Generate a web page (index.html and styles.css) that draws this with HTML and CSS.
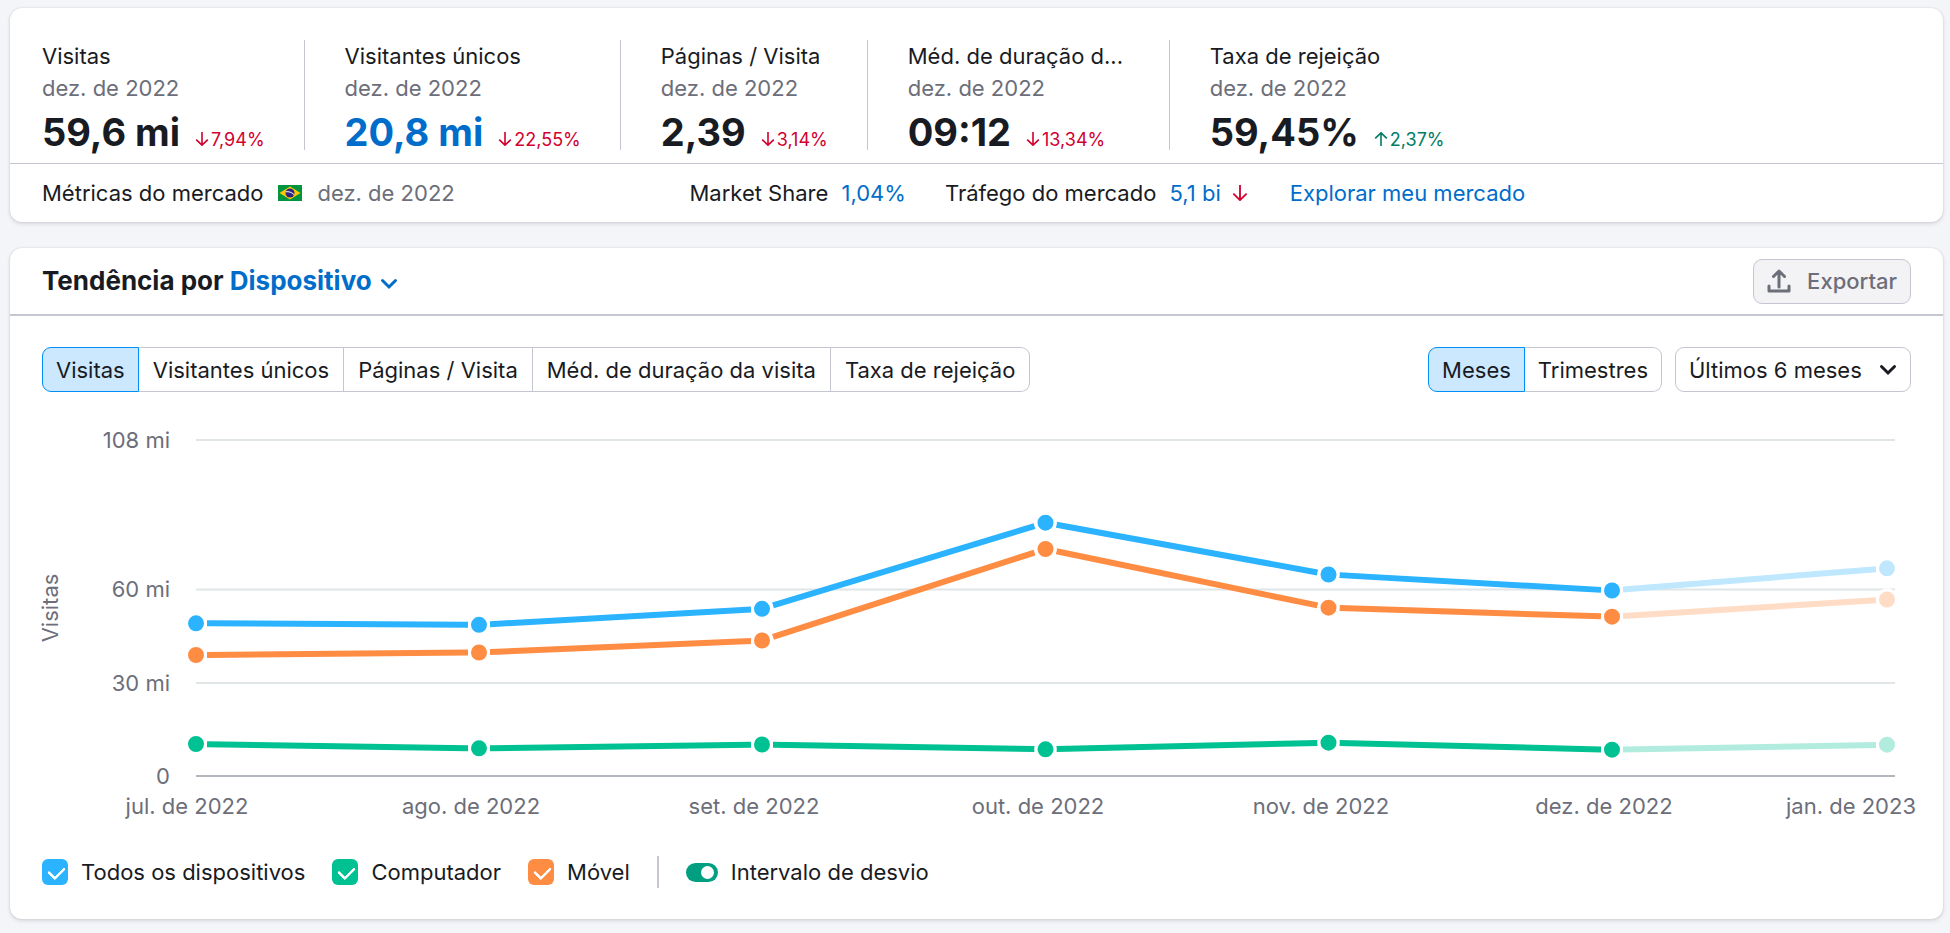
FILE: index.html
```html
<!DOCTYPE html>
<html lang="pt-BR">
<head>
<meta charset="utf-8">
<title>Visitas</title>
<link rel="stylesheet" href="styles.css">
</head>
<body>
<svg class="defs" width="0" height="0" aria-hidden="true">
  <symbol id="arrow-down" viewBox="0 0 14 14"><path d="M7 0v13M1.2 7.6 7 13.2l5.800-5.600" fill="none" stroke="currentColor" stroke-width="1.6"/></symbol>
  <symbol id="arrow-up" viewBox="0 0 14 14"><path d="M7 14V1M1.200 6.400 7 .8l5.800 5.600" fill="none" stroke="currentColor" stroke-width="1.600"/></symbol>
  <symbol id="chevron" viewBox="0 0 18 12"><path d="M2.500 2.500 9 9l6.500-6.500" fill="none" stroke="currentColor" stroke-width="3" stroke-linecap="round" stroke-linejoin="miter"/></symbol>
</svg>
<main class="page">
  <section class="card">
    <div class="metrics">
      <div class="metric">
        <div class="metric-name">Visitas</div>
        <div class="metric-date">dez. de 2022</div>
        <div class="metric-row"><strong class="value">59,6 mi</strong><span class="delta down"><svg class="delta-icon"><use href="#arrow-down"/></svg>7,94%</span></div>
      </div>
      <div class="metric">
        <div class="metric-name">Visitantes únicos</div>
        <div class="metric-date">dez. de 2022</div>
        <div class="metric-row"><a class="value link" href="#">20,8 mi</a><span class="delta down"><svg class="delta-icon"><use href="#arrow-down"/></svg>22,55%</span></div>
      </div>
      <div class="metric">
        <div class="metric-name">Páginas / Visita</div>
        <div class="metric-date">dez. de 2022</div>
        <div class="metric-row"><strong class="value">2,39</strong><span class="delta down"><svg class="delta-icon"><use href="#arrow-down"/></svg>3,14%</span></div>
      </div>
      <div class="metric">
        <div class="metric-name">Méd. de duração d...</div>
        <div class="metric-date">dez. de 2022</div>
        <div class="metric-row"><strong class="value">09:12</strong><span class="delta down"><svg class="delta-icon"><use href="#arrow-down"/></svg>13,34%</span></div>
      </div>
      <div class="metric">
        <div class="metric-name">Taxa de rejeição</div>
        <div class="metric-date">dez. de 2022</div>
        <div class="metric-row"><strong class="value">59,45%</strong><span class="delta up"><svg class="delta-icon"><use href="#arrow-up"/></svg>2,37%</span></div>
      </div>
    </div>
    <div class="market">
      <div class="market-title">
        <span>Métricas do mercado</span>
        <svg class="flag" viewBox="0 0 24 16" role="img" aria-label="Brasil">
          <rect width="24" height="16" fill="#009440"/>
          <path d="M12 1.500 22.500 8 12 14.500 1.500 8z" fill="#ffcb00"/>
          <circle cx="12" cy="8" r="4.500" fill="#302681"/>
          <path d="M7.800 6.800c3-.5 6 .5 8.200 2.800" fill="none" stroke="#fff" stroke-width="1"/>
        </svg>
        <span class="muted">dez. de 2022</span>
      </div>
      <div class="market-facts">
        <span class="fact">Market Share <a class="link" href="#">1,04%</a></span>
        <span class="fact">Tráfego do mercado <a class="link" href="#">5,1 bi</a><svg class="fact-icon down"><use href="#arrow-down"/></svg></span>
        <a class="link" href="#">Explorar meu mercado</a>
      </div>
    </div>
  </section>

  <section class="card">
    <header class="card-head">
      <h2 class="title">Tendência por <button class="title-pick" type="button">Dispositivo<svg class="chevron"><use href="#chevron"/></svg></button></h2>
      <button class="export" type="button"><svg class="export-icon" viewBox="0 0 24 24"><path d="M12 18V3M6.500 7.500 12 2l5.500 5.500M2 17v5h20v-5" fill="none" stroke="currentColor" stroke-width="3" stroke-linecap="round" stroke-linejoin="round"/></svg>Exportar</button>
    </header>
    <div class="controls">
      <div class="pills tabs">
        <button class="pill selected" type="button">Visitas</button>
        <button class="pill" type="button">Visitantes únicos</button>
        <button class="pill" type="button">Páginas / Visita</button>
        <button class="pill" type="button">Méd. de duração da visita</button>
        <button class="pill" type="button">Taxa de rejeição</button>
      </div>
      <div class="period">
        <div class="pills">
          <button class="pill selected" type="button">Meses</button>
          <button class="pill" type="button">Trimestres</button>
        </div>
        <div class="select-box">
          <select class="select" aria-label="Período"><option>Últimos 6 meses</option></select>
          <svg class="chevron select-chevron"><use href="#chevron"/></svg>
        </div>
      </div>
    </div>
    <svg class="chart" viewBox="0 0 1933 464" role="img" aria-label="Visitas por dispositivo">
      <path class="grid" d="M186 48H1885M186 197.500H1885M186 291H1885"/>
      <path class="axis" d="M186 384H1885"/>
      <g class="tick end">
        <text x="160" y="56">108 mi</text><text x="160" y="205">60 mi</text><text x="160" y="299">30 mi</text><text x="160" y="392">0</text>
      </g>
      <text class="tick" transform="translate(48 216) rotate(-90)">Visitas</text>
      <g class="tick">
        <text x="177" y="422">jul. de 2022</text><text x="461" y="422">ago. de 2022</text><text x="744" y="422">set. de 2022</text><text x="1028" y="422">out. de 2022</text><text x="1311" y="422">nov. de 2022</text><text x="1594" y="422">dez. de 2022</text><text x="1841" y="422">jan. de 2023</text>
      </g>
      <g id="series"></g>
    </svg>
    <div class="legend">
      <label class="check"><input class="box all" type="checkbox" checked>Todos os dispositivos</label>
      <label class="check"><input class="box desktop" type="checkbox" checked>Computador</label>
      <label class="check"><input class="box mobile" type="checkbox" checked>Móvel</label>
      <span class="legend-rule"></span>
      <label class="check"><input class="toggle" type="checkbox" role="switch" checked>Intervalo de desvio</label>
    </div>
  </section>
</main>
<script src="chart.js"></script>
</body>
</html>
```
FILE: styles.css
```css
* { box-sizing: border-box; }

body {
  margin: 0;
  background: #f4f5f9;
  color: #191b23;
  font: 400 22px/32px Inter, "Liberation Sans", sans-serif;
}

button, select, input { font: inherit; color: inherit; margin: 0; }
button, select { cursor: pointer; }
.defs { position: absolute; }

.page {
  display: flex;
  flex-direction: column;
  gap: 26px;
  padding: 8px 7px 13px 10px;
}

.card {
  background: #fff;
  border-radius: 12px;
  box-shadow: 0 0 2px rgba(25, 27, 35, .16), 0 2px 4px rgba(25, 27, 35, .12);
}

.link { color: #006dca; text-decoration: none; }
.muted { color: #6c6e79; }
.down { color: #d1002f; }
.up { color: #007c65; }

.metrics {
  display: flex;
  padding: 32px 32px 13px;
  border-bottom: 1px solid #c4c7cf;
}
.metric {
  padding: 0 39px 0 40px;
  border-right: 1px solid #c4c7cf;
}
.metric:first-child { padding-left: 0; }
.metric:last-child { border-right: 0; }
.metric:nth-child(4) { min-width: 302px; }
.metric-name { white-space: nowrap; }
.metric-date { color: #6c6e79; }
.metric-row {
  display: flex;
  align-items: baseline;
  gap: 15px;
  margin-top: 10px;
  line-height: 36px;
}
.value { font-size: 38px; font-weight: 700; white-space: nowrap; }
.delta { font-size: 18px; line-height: 20px; white-space: nowrap; }
.delta-icon { width: 14px; height: 14px; margin-right: 2px; }

.market { display: flex; padding: 13px 32px; }
.market-title {
  display: flex;
  align-items: center;
  gap: 15px;
  width: 34%;
}
.flag { width: 24px; height: 16px; }
.market-facts { display: flex; gap: 39px; padding-left: 12px; }
.fact .link { margin-left: 7px; }
.fact-icon { width: 16px; height: 16px; margin: 0 3px 0 11px; }

.card-head {
  display: flex;
  align-items: center;
  justify-content: space-between;
  height: 68px;
  padding: 0 32px;
  border-bottom: 2px solid #c4c7cf;
}
.title { margin: 0; font-size: 26px; font-weight: 700; }
.title-pick {
  padding: 0;
  border: 0;
  background: none;
  color: #006dca;
}
.chevron { width: 18px; height: 12px; margin-left: 8px; }
.export {
  display: flex;
  align-items: center;
  gap: 16px;
  height: 45px;
  padding: 0 13px;
  border: 1px solid #c4c7cf;
  border-radius: 9px;
  background: #f3f3f5;
  color: #6c6e79;
  font-weight: 500;
}
.export-icon { width: 24px; height: 24px; }

.controls {
  display: flex;
  justify-content: space-between;
  padding: 31px 32px 0;
}
.period { display: flex; gap: 13px; }
.pills { display: flex; }
.pill {
  height: 45px;
  padding: 0 13px;
  border: 1px solid #c4c7cf;
  border-left-width: 0;
  background: #fff;
  white-space: nowrap;
}
.tabs .pill:not(.selected) { padding: 0 14px; }
.pill:first-child { border-radius: 9px 0 0 9px; }
.pill:last-child { border-radius: 0 9px 9px 0; }
.selected { background: #cce8ff; border: 1px solid #008ff8; }
.select-box { position: relative; }
.select {
  appearance: none;
  height: 45px;
  padding: 0 48px 0 13px;
  border: 1px solid #c4c7cf;
  border-radius: 9px;
  background: #fff;
}
.select-chevron {
  position: absolute;
  right: 14px;
  top: 17px;
  pointer-events: none;
}

.chart { display: block; width: 100%; height: auto; }
.grid { stroke: #e0e6e8; stroke-width: 2; }
.axis { stroke: #b1b7bd; stroke-width: 2; }
.tick { fill: #6c6e79; text-anchor: middle; }
.end { text-anchor: end; }
.line { stroke-width: 6; }
.dot { stroke: #fff; stroke-width: 3; }

.legend {
  display: flex;
  align-items: center;
  gap: 27px;
  padding: 0 32px 31px;
}
.check { display: flex; align-items: center; gap: 13px; }
.box {
  appearance: none;
  width: 26px;
  height: 26px;
  border-radius: 6px;
}
.box::after {
  content: "";
  display: block;
  width: 8px;
  height: 13px;
  margin: 4px 9px;
  border: solid #fff;
  border-width: 0 3px 3px 0;
  border-radius: 2px;
  transform: rotate(45deg);
}
.all { background: #2bb3ff; }
.desktop { background: #00c192; }
.mobile { background: #ff8c43; }
.legend-rule { width: 2px; height: 32px; background: #c4c7cf; }
.toggle {
  appearance: none;
  display: flex;
  justify-content: flex-end;
  width: 32px;
  height: 19px;
  padding: 3px 4px;
  border-radius: 10px;
  background: #009f81;
}
.toggle::after {
  content: "";
  width: 13px;
  height: 13px;
  border-radius: 50%;
  background: #fff;
}
```
FILE: chart.js
```js
const xs = [186, 469, 752, 1035.5, 1318.5, 1602, 1877];
const series = [
  { color: "#00c192", pale: "#b2ecde", ys: [352, 356.3, 352.5, 357.3, 350.7, 357.7, 352.7] },
  { color: "#ff8c43", pale: "#ffdcc6", ys: [263, 260.5, 248.5, 157, 215.7, 224.7, 207.5] },
  { color: "#2bb3ff", pale: "#bfe8ff", ys: [231.3, 232.8, 216.8, 130.7, 182.5, 198.5, 176.3] }
];
const gap = 11;
const root = document.getElementById("series");

function add(tag, attrs) {
  const el = document.createElementNS("http://www.w3.org/2000/svg", tag);
  for (const key in attrs) el.setAttribute(key, attrs[key]);
  root.appendChild(el);
}

for (const { color, pale, ys } of series) {
  const last = xs.length - 1;
  for (let i = 0; i < last; i++) {
    const slope = (ys[i + 1] - ys[i]) / (xs[i + 1] - xs[i]);
    add("line", {
      class: "line",
      x1: xs[i] + gap, y1: ys[i] + slope * gap,
      x2: xs[i + 1] - gap, y2: ys[i + 1] - slope * gap,
      stroke: i === last - 1 ? pale : color
    });
  }
  // The last month is a forecast and is drawn pale.
  xs.forEach((x, i) => add("circle", {
    class: "dot", cx: x, cy: ys[i], r: 9.5, fill: i === last ? pale : color
  }));
}
```
